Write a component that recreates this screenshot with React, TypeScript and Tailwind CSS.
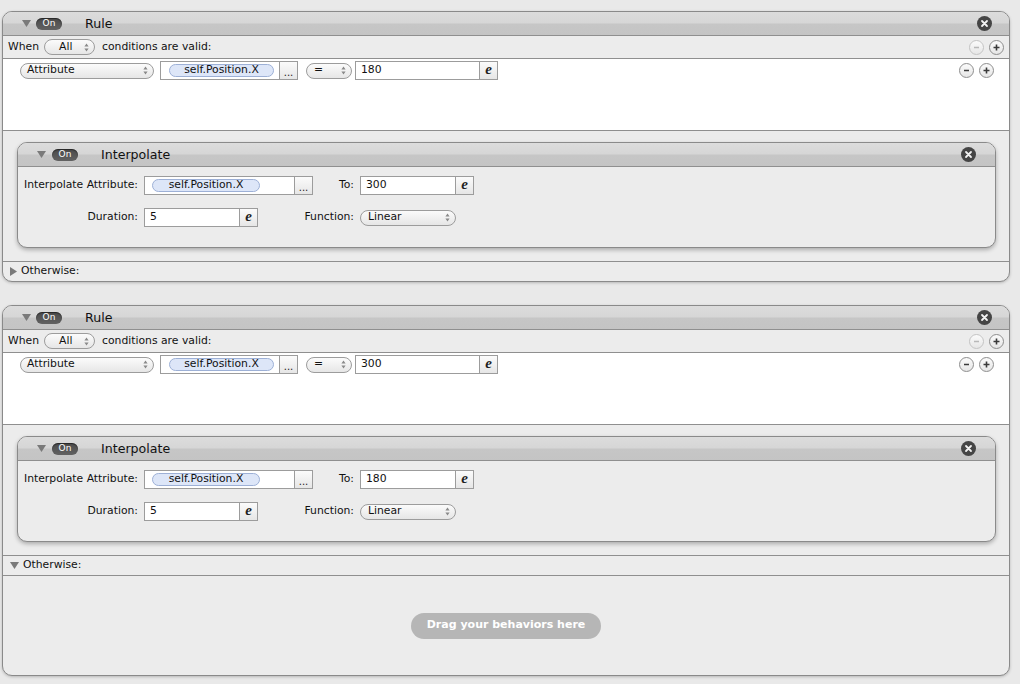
import React from "react";

const hdrBg = "bg-[linear-gradient(to_bottom,#dcdcdc_0%,#d6d6d6_48%,#c6c6c6_52%,#c4c4c4_100%)]";
const btnBg = "bg-[linear-gradient(to_bottom,#fbfbfb,#e6e6e6)]";

function Tri({ dir }: { dir: "down" | "right" }) {
  if (dir === "down") {
    return (
      <svg width="9" height="7" viewBox="0 0 9 7" className="shrink-0">
        <path d="M0 0 H9 L4.5 7 Z" fill="#7a7a7a" />
      </svg>
    );
  }
  return (
    <svg width="7" height="9" viewBox="0 0 7 9" className="shrink-0">
      <path d="M0 0 V9 L7 4.5 Z" fill="#7a7a7a" />
    </svg>
  );
}

function OnPill() {
  return (
    <span className="flex items-center justify-center w-[26px] h-[12px] rounded-full bg-[linear-gradient(to_bottom,#4a4a4a,#626262)] text-white text-[9px] leading-none shadow-[inset_0_1px_1px_rgba(0,0,0,0.5)]">
      On
    </span>
  );
}

function CloseBtn() {
  return (
    <svg width="15" height="15" viewBox="0 0 15 15" className="shrink-0">
      <circle cx="7.5" cy="7.5" r="7.5" fill="#454545" />
      <path d="M5 5 L10 10 M10 5 L5 10" stroke="#f2f2f2" strokeWidth="1.8" strokeLinecap="round" />
    </svg>
  );
}

function RoundBtn({ sign, disabled }: { sign: "+" | "-"; disabled?: boolean }) {
  const stroke = disabled ? "#b8b8b8" : "#3a3a3a";
  return (
    <span
      className={`flex items-center justify-center w-[15px] h-[15px] rounded-full border ${btnBg} ${
        disabled ? "border-[#c4c4c4]" : "border-[#8e8e8e]"
      }`}
    >
      <svg width="7" height="7" viewBox="0 0 7 7">
        <path d={sign === "+" ? "M0.5 3.5 H6.5 M3.5 0.5 V6.5" : "M1 3.5 H6"} stroke={stroke} strokeWidth="1.6" />
      </svg>
    </span>
  );
}

function Select({ label, className }: { label: string; className: string }) {
  return (
    <div
      className={`flex items-center h-[16px] rounded-full border border-[#9c9c9c] ${btnBg} pr-[5px] ${className}`}
    >
      <span className="flex-1 text-[#111] leading-none">{label}</span>
      <svg width="5" height="9" viewBox="0 0 5 9" className="shrink-0">
        <path d="M2.5 0.5 L4.6 3.4 H0.4 Z M2.5 8.5 L4.6 5.6 H0.4 Z" fill="#8a8a8a" />
      </svg>
    </div>
  );
}

function Token({ text, className }: { text: string; className: string }) {
  return (
    <span
      className={`flex items-center justify-center h-[13px] rounded-full border border-[#9db0d6] bg-[#dde6f8] text-[#111] leading-none ${className}`}
    >
      {text}
    </span>
  );
}

function SideBtn({ children }: { children: React.ReactNode }) {
  return (
    <span
      className={`flex items-center justify-center w-[18px] h-full border-l border-[#9c9c9c] ${btnBg} text-[#222]`}
    >
      {children}
    </span>
  );
}

function EBtn() {
  return (
    <SideBtn>
      <span className="font-['Liberation_Serif',serif] italic font-bold text-[15px] leading-none -mt-[2px]">e</span>
    </SideBtn>
  );
}

function Dots() {
  return (
    <SideBtn>
      <span className="text-[10px] leading-none mt-[4px]">...</span>
    </SideBtn>
  );
}

function AttrField({ className, tokenClass }: { className: string; tokenClass: string }) {
  return (
    <div className={`flex h-[19px] border border-[#9c9c9c] bg-white ${className}`}>
      <div className="flex-1 flex items-center">
        <Token text="self.Position.X" className={tokenClass} />
      </div>
      <Dots />
    </div>
  );
}

function ValueField({ value, className }: { value: string; className: string }) {
  return (
    <div className={`flex h-[19px] border border-[#9c9c9c] bg-white ${className}`}>
      <span className="flex-1 flex items-center pl-[5px] text-[#111]">{value}</span>
      <EBtn />
    </div>
  );
}

function Interpolate({ to }: { to: string }) {
  return (
    <div className="w-[979px] h-[106px] rounded-[10px] border border-[#8a8a8a] bg-[#ececec] overflow-hidden shadow-[0_2px_4px_rgba(0,0,0,0.28)]">
      <div className={`flex items-center h-[24px] border-b border-[#8f8f8f] ${hdrBg} pl-[19px] pr-[19px]`}>
        <Tri dir="down" />
        <span className="ml-[6px]">
          <OnPill />
        </span>
        <span className="ml-[23px] mt-[1px] text-[12.6px] text-[#111]">Interpolate</span>
        <span className="ml-auto">
          <CloseBtn />
        </span>
      </div>
      <div className="flex flex-col gap-[13px] pt-[9px]">
        <div className="flex items-center">
          <span className="w-[120px] text-right text-[#111]">Interpolate Attribute:</span>
          <AttrField className="ml-[6px] w-[169px]" tokenClass="ml-[7px] w-[108px]" />
          <span className="w-[41px] text-right text-[#111]">To:</span>
          <ValueField value={to} className="ml-[6px] w-[114px]" />
        </div>
        <div className="flex items-center">
          <span className="w-[120px] text-right text-[#111]">Duration:</span>
          <ValueField value="5" className="ml-[6px] w-[114px]" />
          <span className="w-[96px] text-right text-[#111]">Function:</span>
          <Select label="Linear" className="ml-[6px] w-[96px] pl-[7px]" />
        </div>
      </div>
    </div>
  );
}

function Rule({ value, to, open }: { value: string; to: string; open?: boolean }) {
  return (
    <div className="w-[1008px] rounded-[10px] border border-[#8a8a8a] bg-[#ececec] overflow-hidden shadow-[0_1px_3px_rgba(0,0,0,0.22)]">
      <div className={`flex items-center h-[24px] border-b border-[#8f8f8f] ${hdrBg} pl-[19px] pr-[17px]`}>
        <Tri dir="down" />
        <span className="ml-[5px]">
          <OnPill />
        </span>
        <span className="ml-[23px] mt-[1px] text-[12.6px] text-[#111]">Rule</span>
        <span className="ml-auto">
          <CloseBtn />
        </span>
      </div>
      <div className="flex items-center h-[23px] border-b border-[#8f8f8f] pl-[5px] pr-[5px]">
        <span className="text-[#111]">When</span>
        <Select label="All" className="ml-[5px] w-[51px] pl-[14px]" />
        <span className="ml-[7px] text-[#111]">conditions are valid:</span>
        <span className="ml-auto flex gap-[5px]">
          <RoundBtn sign="-" disabled />
          <RoundBtn sign="+" />
        </span>
      </div>
      <div className="h-[72px] bg-white border-b border-[#8f8f8f] pl-[17px] pr-[15px] pt-[2px]">
        <div className="flex items-center">
          <Select label="Attribute" className="w-[134px] pl-[6px]" />
          <AttrField className="ml-[6px] w-[138px]" tokenClass="ml-[8px] w-[105px]" />
          <Select label="=" className="ml-[8px] w-[46px] pl-[7px]" />
          <ValueField value={value} className="ml-[3px] w-[143px]" />
          <span className="ml-auto flex gap-[5px]">
            <RoundBtn sign="-" />
            <RoundBtn sign="+" />
          </span>
        </div>
      </div>
      <div className="h-[131px] border-b border-[#8f8f8f] pl-[14px] pt-[11px]">
        <Interpolate to={to} />
      </div>
      <div className={`flex items-center gap-[4px] h-[19px] pl-[7px] ${open ? "border-b border-[#8f8f8f] h-[20px]" : ""}`}>
        <Tri dir={open ? "down" : "right"} />
        <span className="text-[#111]">Otherwise:</span>
      </div>
      {open && (
        <div className="h-[99px] flex items-center justify-center">
          <span className="flex items-center justify-center w-[190px] h-[26px] rounded-full bg-[#b6b6b6] text-white font-bold text-[11px]">
            Drag your behaviors here
          </span>
        </div>
      )}
    </div>
  );
}

export default function App() {
  return (
    <div className="w-[1020px] h-[684px] overflow-hidden bg-[#e9e9e9] font-['DejaVu_Sans',sans-serif] text-[10.8px] pt-[11px] pl-[2px] flex flex-col gap-[23px]">
      <Rule value="180" to="300" />
      <Rule value="300" to="180" open />
    </div>
  );
}
